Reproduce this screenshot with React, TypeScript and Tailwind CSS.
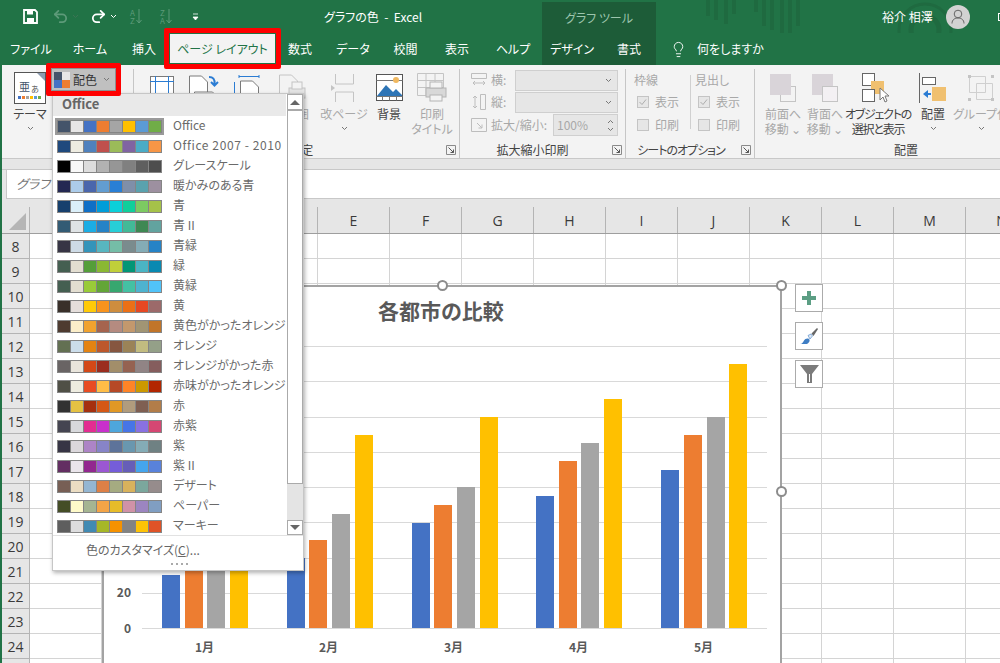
import { Lightbulb, Redo2, Undo2 } from "lucide-react";
import type { ReactNode } from "react";

const SCHEMES: { name: string; colors: string[] }[] = [
  { name: "Office", colors: ["#44546a", "#e7e6e6", "#4472c4", "#ed7d31", "#a5a5a5", "#ffc000", "#5b9bd5", "#70ad47"] },
  { name: "Office 2007 - 2010", colors: ["#1f497d", "#eeece1", "#4f81bd", "#c0504d", "#9bbb59", "#8064a2", "#4bacc6", "#f79646"] },
  { name: "グレースケール", colors: ["#000000", "#f8f8f8", "#dddddd", "#b2b2b2", "#969696", "#808080", "#5f5f5f", "#4d4d4d"] },
  { name: "暖かみのある青", colors: ["#242852", "#acccea", "#4a66ac", "#629dd1", "#297fd5", "#7f8fa9", "#5aa2ae", "#9d90a0"] },
  { name: "青", colors: ["#17406d", "#dbeff9", "#0f6fc6", "#009dd9", "#0bd0d9", "#10cf9b", "#7cca62", "#a5c249"] },
  { name: "青 II", colors: ["#335b74", "#dfe3e5", "#1cade4", "#2683c6", "#27ced7", "#42ba97", "#3e8853", "#62a39f"] },
  { name: "青緑", colors: ["#373545", "#cedbe6", "#3494ba", "#58b6c0", "#75bda7", "#7a8c8e", "#84acb6", "#2683c6"] },
  { name: "緑", colors: ["#455f51", "#e3ded1", "#549e39", "#8ab833", "#c0cf3a", "#029676", "#4ab5c4", "#0989b1"] },
  { name: "黄緑", colors: ["#455f51", "#e3ded1", "#99cb38", "#63a537", "#37a76f", "#44c1a3", "#4eb3cf", "#51c3f9"] },
  { name: "黄", colors: ["#39302a", "#e5dedb", "#ffca08", "#f8931d", "#ce8d3e", "#ec7016", "#e64823", "#9c6a6a"] },
  { name: "黄色がかったオレンジ", colors: ["#4e3b30", "#fbeec9", "#f0a22e", "#a5644e", "#b58b80", "#c3986d", "#a19574", "#c17529"] },
  { name: "オレンジ", colors: ["#637052", "#ccddea", "#e48312", "#bd582c", "#865640", "#9b8357", "#c2bc80", "#94a088"] },
  { name: "オレンジがかった赤", colors: ["#696464", "#e9e5dc", "#d34817", "#9b2d1f", "#a28e6a", "#956251", "#918485", "#855d5d"] },
  { name: "赤味がかったオレンジ", colors: ["#505046", "#eeece0", "#e84c22", "#ffbd47", "#b64926", "#ff8427", "#cc9900", "#b22600"] },
  { name: "赤", colors: ["#323232", "#e5c243", "#a5300f", "#d55816", "#e19825", "#b19c7d", "#7f5f52", "#b27d49"] },
  { name: "赤紫", colors: ["#454551", "#d8d9dc", "#e32d91", "#c830cc", "#4ea6dc", "#4775e7", "#8971e1", "#d54773"] },
  { name: "紫", colors: ["#373545", "#dcd8dc", "#ad84c6", "#8784c7", "#5d739a", "#6997af", "#84acb6", "#6f8183"] },
  { name: "紫 II", colors: ["#632e62", "#eae5eb", "#92278f", "#9b57d3", "#755dd9", "#665eb8", "#45a5ed", "#5982db"] },
  { name: "デザート", colors: ["#775f55", "#ebddc3", "#94b6d2", "#dd8047", "#a5ab81", "#d8b25c", "#7ba79d", "#968c8c"] },
  { name: "ペーパー", colors: ["#444d26", "#fefac9", "#a5b592", "#f3a447", "#e7bc29", "#d092a7", "#9c85c0", "#809ec2"] },
  { name: "マーキー", colors: ["#5e5e5e", "#ddddde", "#418ab3", "#a6b727", "#f69200", "#838383", "#fec306", "#df5327"] },
];

const COLUMNS = ["A", "B", "C", "D", "E", "F", "G", "H", "I", "J", "K", "L", "M", "N"];
const ROWS = [8, 9, 10, 11, 12, 13, 14, 15, 16, 17, 18, 19, 20, 21, 22, 23, 24, 25];

// bar top positions per month: blue, orange, gray, yellow
const BARS = [
  { label: "1月", x: [162, 185, 207, 230], top: [575, 540, 540, 540] },
  { label: "2月", x: [287, 309, 332, 355], top: [558, 540, 514, 435] },
  { label: "3月", x: [412, 434, 457, 480], top: [523, 505, 487, 417] },
  { label: "4月", x: [536, 559, 581, 604], top: [496, 461, 443, 399] },
  { label: "5月", x: [661, 684, 707, 729], top: [470, 435, 417, 364] },
];
const BAR_COLORS = ["#4472c4", "#ed7d31", "#a5a5a5", "#ffc000"];
const GRID_Y = [628, 593, 558, 522, 487, 452, 417, 381, 346];

function Chevron({ className = "" }: { className?: string }) {
  return (
    <svg width="7" height="5" viewBox="0 0 7 5" className={className}>
      <path d="M1 1l2.500 2.500L6 1" fill="none" stroke="#777" strokeWidth="1" />
    </svg>
  );
}

function Launcher() {
  return (
    <svg width="10" height="10" viewBox="0 0 10 10">
      <path d="M.5 9.500v-9h9v9z" fill="none" stroke="#8a8a8a" />
      <path d="M2.500 2.500l5 5M7.500 4.500v3h-3" fill="none" stroke="#555" />
    </svg>
  );
}

function SortIcon({ top, bottom }: { top: string; bottom: string }) {
  return (
    <div className="flex w-[15px] shrink-0 items-center gap-[1px]">
      <span className="flex flex-col text-[8px] leading-[8px] text-[#5d9a79]">
        <span>{top}</span>
        <span>{bottom}</span>
      </span>
      <svg width="6" height="15" viewBox="0 0 6 15">
        <path d="M3 0v14M.5 11L3 14l2.500-3" fill="none" stroke="#5d9a79" />
      </svg>
    </div>
  );
}

function TabLabel({ label, className }: { label: string; className: string }) {
  return <div className={`flex h-full items-center justify-center text-[12px] text-white ${className}`}>{label}</div>;
}

function RibbonBtn({
  width,
  icon,
  lines,
  chevron,
  disabled,
  labelClass = "",
}: {
  width: string;
  icon: ReactNode;
  lines: string[];
  chevron?: boolean;
  disabled?: boolean;
  labelClass?: string;
}) {
  return (
    <div className={`flex shrink-0 flex-col items-center ${width}`}>
      <div className="flex h-[37px] items-center justify-center">{icon}</div>
      <div className={`flex flex-col items-center whitespace-nowrap text-[12px] leading-[15px] ${disabled ? "text-[#a8a8a8]" : "text-[#444]"} ${labelClass}`}>
        {lines.map((l) => (
          <span key={l}>{l}</span>
        ))}
      </div>
      {chevron && <Chevron className="mt-[5px]" />}
    </div>
  );
}

function ThemeIcon() {
  return (
    <svg width="32" height="32" viewBox="0 0 32 32">
      <rect x=".5" y=".5" width="31" height="31" fill="#fff" stroke="#555" />
      <path d="M23 1h8v8z" fill="#8c9bb0" />
      <rect x="4" y="24" width="3" height="3" fill="#4472c4" />
      <rect x="8" y="24" width="3" height="3" fill="#ed7d31" />
      <rect x="12" y="24" width="3" height="3" fill="#a5a5a5" />
      <rect x="16" y="24" width="3" height="3" fill="#ffc000" />
      <rect x="20" y="24" width="3" height="3" fill="#5b9bd5" />
      <rect x="24" y="24" width="3" height="3" fill="#70ad47" />
      <text x="5" y="19" fontSize="11" fill="#44546a">亜</text>
      <text x="17" y="20" fontSize="8" fill="#555">あ</text>
    </svg>
  );
}

function MarginIcon() {
  return (
    <svg width="24" height="24" viewBox="0 0 24 24">
      <rect x=".5" y=".5" width="23" height="23" fill="#fff" stroke="#7a7a7a" />
      <path d="M0 5.500h24M5.500 0v24M18.500 0v24" stroke="#2b7cd3" fill="none" />
    </svg>
  );
}

function OrientIcon() {
  return (
    <svg width="30" height="26" viewBox="0 0 30 26">
      <path d="M.5 25V1h12l6 6v18z" fill="#fff" stroke="#7a7a7a" />
      <path d="M5.500 25v-8h18l6 6v2" fill="#fff" stroke="#7a7a7a" />
      <path d="M20 2c4 0 6 2 5.500 7M22 7l3.500 3.500L29 7" fill="none" stroke="#2b7cd3" strokeWidth="2" />
    </svg>
  );
}

function SizeIcon() {
  return (
    <svg width="26" height="26" viewBox="0 0 26 26">
      <path d="M5 1.500h20M.5 7v19M5 0v3M25 0v3" stroke="#2b7cd3" fill="none" />
      <path d="M6.500 26V6h12l6 6v14" fill="#fff" stroke="#7a7a7a" />
    </svg>
  );
}

function PrintAreaIcon() {
  return (
    <svg width="28" height="28" viewBox="0 0 28 28">
      <path d="M.5 27V1h12l6 6v20z" fill="#f3f3f3" stroke="#c4c4c4" />
      <rect x="10" y="14" width="16" height="10" fill="#e4e4e4" stroke="#c4c4c4" />
      <rect x="13" y="8" width="10" height="7" fill="#f3f3f3" stroke="#c4c4c4" />
    </svg>
  );
}

function BreakIcon() {
  return (
    <svg width="26" height="28" viewBox="0 0 26 28">
      <path d="M4.500 0v10h18V0M4.500 28V18h18v10" fill="none" stroke="#c4c4c4" />
      <path d="M0 11l4 3-4 3z" fill="#c4c4c4" />
    </svg>
  );
}

function BackgroundIcon() {
  return (
    <svg width="27" height="27" viewBox="0 0 27 27">
      <rect x=".5" y=".5" width="26" height="26" fill="#fff" stroke="#555" />
      <path d="M.5 6.500h26M.5 22.500h26M6.500 22.500v4M13.500 22.500v4M20.500 22.500v4" stroke="#777" fill="none" />
      <circle cx="20" cy="6" r="3" fill="#f0b860" />
      <path d="M1 22l9-11 7 7 3-3 6 6v1z" fill="#2e75b6" />
    </svg>
  );
}

function TitlesIcon() {
  return (
    <svg width="30" height="30" viewBox="0 0 30 30">
      <path d="M.5.500h26v22H.5zM.5 7.500h26M.5 14.500h26M9 .5v22M18 .5v22" fill="none" stroke="#c4c4c4" />
      <rect x="9" y="15" width="20" height="9" fill="#d8d8d8" stroke="#b4b4b4" />
      <rect x="13" y="9" width="12" height="6" fill="#f3f3f3" stroke="#b4b4b4" />
      <rect x="13" y="22" width="12" height="6" fill="#f3f3f3" stroke="#b4b4b4" />
    </svg>
  );
}

function FrontIcon({ back }: { back?: boolean }) {
  return back ? (
    <svg width="27" height="28" viewBox="0 0 27 28">
      <rect x="0" y="0" width="21" height="21" fill="#d9d4d9" />
      <rect x="10.500" y="12.500" width="15" height="15" fill="#f3f0f3" stroke="#c4c4c4" />
    </svg>
  ) : (
    <svg width="27" height="28" viewBox="0 0 27 28">
      <rect x="10.500" y="12.500" width="15" height="15" fill="#f3f3f3" stroke="#c4c4c4" />
      <rect x="0" y="0" width="21" height="21" fill="#d9d4d9" />
    </svg>
  );
}

function SelectionIcon() {
  return (
    <svg width="32" height="30" viewBox="0 0 32 30">
      <rect x=".5" y=".5" width="12" height="12" fill="#fff" stroke="#666" />
      <rect x="9" y="8" width="13" height="13" fill="#f0c070" />
      <rect x=".5" y="16.500" width="12" height="12" fill="#fff" stroke="#666" />
      <path d="M18 15v12l3-3 2 5 2-1-2-5h4z" fill="#fff" stroke="#777" />
    </svg>
  );
}

function AlignIcon() {
  return (
    <svg width="28" height="30" viewBox="0 0 28 30">
      <path d="M.5 0v30" stroke="#666" />
      <rect x="3.500" y="4.500" width="13" height="7" fill="#fff" stroke="#666" />
      <rect x="13" y="14" width="14" height="14" fill="#f0c070" />
      <path d="M4 21l5-4v3h3v2H9v3z" fill="#2b7cd3" />
    </svg>
  );
}

function GroupIcon() {
  return (
    <svg width="28" height="28" viewBox="0 0 28 28">
      <path d="M2.500 2.500h16v16h-16zM9.500 9.500h16v16h-16z" fill="none" stroke="#cfcfcf" />
      <path d="M1 1h3v3H1zM24 1h3v3h-3zM1 24h3v3H1zM24 24h3v3h-3z" fill="#c4c4c4" />
    </svg>
  );
}

function ScaleIcon({ kind }: { kind: "w" | "h" | "s" }) {
  return (
    <svg width="16" height="16" viewBox="0 0 16 16">
      {kind === "w" && <path d="M.5 1.500h15v5H.5zM2 11h12M2 11l2-2M2 11l2 2M14 11l-2-2M14 11l-2 2" fill="none" stroke="#bdbdbd" />}
      {kind === "h" && <path d="M9.500.5h5v15h-5zM4 2v12M4 2L2 4M4 2l2 2M4 14l-2-2M4 14l2-2" fill="none" stroke="#bdbdbd" />}
      {kind === "s" && <path d="M.5 1.500h15v13H.5zM6 6l5 5M11 7.500V11H7.500" fill="none" stroke="#bdbdbd" />}
    </svg>
  );
}

function Checkbox({ label }: { label: string }) {
  const checked = label === "表示";
  return (
    <div className="flex h-[23px] items-center gap-[6px] text-[12px] text-[#a8a8a8]">
      <svg width="12" height="12" viewBox="0 0 12 12">
        <rect x=".5" y=".5" width="11" height="11" fill="#e6e6e6" stroke="#c4c4c4" />
        {checked && <path d="M2.500 6l2.500 2.500 4-5" fill="none" stroke="#adadad" />}
      </svg>
      <span>{label}</span>
    </div>
  );
}

function Group({ width, label, children, labelClass = "" }: { width: string; label: string; children: ReactNode; labelClass?: string }) {
  return (
    <div className={`flex h-[89px] shrink-0 flex-col border-r border-[#c6c6c6] ${width}`}>
      <div className="flex h-[72px]">{children}</div>
      <div className={`flex h-[17px] items-center justify-center whitespace-nowrap text-[12px] text-[#444] ${labelClass}`}>{label}</div>
    </div>
  );
}

function TitleBar() {
  return (
    <div className="relative flex h-[33px] items-center">
      <svg width="300" height="33" viewBox="0 0 300 33" className="absolute left-[700px] top-0">
        <path d="M8 0v16M16 0v20M26 0v24M34 0v14M56 0v12M64 0v26M72 0v30M82 0v33M90 0v33M98 0v26" stroke="#1f6a40" strokeWidth="4" />
        <circle cx="225" cy="30" r="14" fill="none" stroke="#1f6a40" strokeWidth="5" />
        <circle cx="225" cy="30" r="26" fill="none" stroke="#1f6a40" strokeWidth="3" />
      </svg>
      {/* quick access */}
      <div className="relative ml-[23px] flex w-[180px] shrink-0 items-center">
        <svg width="15" height="15" viewBox="0 0 15 15">
          <path d="M1 1h11l2 2v11H1z" fill="none" stroke="#fff" strokeWidth="1.800" />
          <path d="M4 1.500h6v4H4zM4 9h7v5H4z" fill="#fff" />
        </svg>
        <Undo2 size={17} strokeWidth={2.500} color="#5d9a79" className="ml-[14px]" />
        <Chevron className="ml-[3px] opacity-30" />
        <Redo2 size={17} strokeWidth={2.500} color="#fff" className="ml-[11px]" />
        <svg width="7" height="5" viewBox="0 0 7 5" className="ml-[3px]">
          <path d="M1 1l2.500 2.500L6 1" fill="none" stroke="#fff" />
        </svg>
        <div className="ml-[13px]">
          <SortIcon top="A" bottom="Z" />
        </div>
        <div className="ml-[15px]">
          <SortIcon top="Z" bottom="A" />
        </div>
        <svg width="7" height="8" viewBox="0 0 7 8" className="ml-[17px]">
          <path d="M1 1h5M1 4h5L3.500 7z" fill="#fff" stroke="#fff" strokeWidth=".8" />
        </svg>
      </div>
      <div className="relative ml-[121px] w-[218px] shrink-0 whitespace-pre text-[12px] text-white">グラフの色  -  Excel</div>
      <div className="relative flex h-[31px] w-[114px] shrink-0 items-center justify-center self-end bg-[#1d5c38] text-[12px] text-[#9cc5ad]">
        グラフ ツール
      </div>
      <div className="relative ml-[226px] w-[64px] shrink-0 whitespace-nowrap text-[12px] text-white">裕介 相澤</div>
      <div className="relative flex h-[24px] w-[24px] shrink-0 items-center justify-center rounded-full bg-[#d2d2d2]">
        <svg width="14" height="15" viewBox="0 0 14 15">
          <circle cx="7" cy="5" r="3.800" fill="none" stroke="#666" />
          <path d="M1 14.500c0-4 3-5.500 6-5.500s6 1.500 6 5.500" fill="none" stroke="#666" />
        </svg>
      </div>
      <div className="relative ml-[28px] h-[8px] w-[8px] shrink-0 border border-white" />
    </div>
  );
}

function Tabs() {
  return (
    <div className="flex h-[32px] items-stretch">
      <TabLabel label="ファイル" className="w-[62px]" />
      <TabLabel label="ホーム" className="w-[56px]" />
      <TabLabel label="挿入" className="w-[52px]" />
      <div className="relative w-[105px]">
        <div className="absolute -bottom-[4px] -left-[6px] -right-[6px] -top-[5px] z-20 rounded-[2px] border-[5px] border-[#f00] bg-[#217346]">
          <div className="mx-[1px] mt-px flex h-[29px] items-center justify-center bg-[#f3f3f3] text-[12px] text-[#217346]">
            ページ レイアウト
          </div>
        </div>
      </div>
      <TabLabel label="数式" className="w-[50px]" />
      <TabLabel label="データ" className="w-[56px]" />
      <TabLabel label="校閲" className="w-[49px]" />
      <TabLabel label="表示" className="w-[54px]" />
      <TabLabel label="ヘルプ" className="w-[58px]" />
      <div className="flex w-[114px] bg-[#1d5c38]">
        <TabLabel label="デザイン" className="w-[60px]" />
        <TabLabel label="書式" className="w-[54px]" />
      </div>
      <div className="ml-[14px] flex items-center gap-[10px] text-[12px] text-white">
        <Lightbulb size={17} strokeWidth={1.300} />
        <span>何をしますか</span>
      </div>
    </div>
  );
}

function Ribbon() {
  return (
    <div className="flex h-[94px] items-start border-b border-[#c8c8c8] bg-[#f3f3f3] pt-[4px]">
      {/* テーマ + 配色 */}
      <div className="flex h-[89px] w-[132px] shrink-0 border-r border-[#c6c6c6]">
        <div className="ml-[7px] w-[42px]">
          <RibbonBtn width="w-[42px]" icon={<ThemeIcon />} lines={["テーマ"]} chevron />
        </div>
        <div className="relative z-20 -ml-[5px] -mt-[6px] h-[33px] w-[75px] rounded-[2px] border-[5px] border-[#f00] bg-[#b4b4b4]">
          <div className="flex h-full items-center border border-[#8f8f8f] bg-[#c0c0c0] pl-[2px]">
            <svg width="16" height="16" viewBox="0 0 16 16">
              <rect x="0" y="0" width="8" height="8" fill="#44546a" />
              <rect x="8" y="0" width="8" height="8" fill="#e7e6e6" />
              <rect x="0" y="8" width="8" height="8" fill="#4472c4" />
              <rect x="8" y="8" width="8" height="8" fill="#ed7d31" />
            </svg>
            <span className="ml-[3px] text-[12px] text-[#333]">配色</span>
            <Chevron className="ml-[6px]" />
          </div>
        </div>
      </div>
      {/* ページ設定 */}
      <Group width="w-[326px] pl-[7px]" label="ページ設定" labelClass="pr-[33px]">
        <RibbonBtn width="w-[42px]" icon={<MarginIcon />} lines={["余白"]} />
        <RibbonBtn width="w-[42px]" icon={<OrientIcon />} lines={["印刷の", "向き"]} />
        <RibbonBtn width="w-[44px]" icon={<SizeIcon />} lines={["サイズ"]} />
        <RibbonBtn
          width="w-[32px]"
          icon={
            <div className="ml-[16px]">
              <PrintAreaIcon />
            </div>
          }
          lines={["印刷範囲"]}
          disabled
        />
        <div className="ml-[16px]">
          <RibbonBtn width="w-[54px]" icon={<BreakIcon />} lines={["改ページ"]} chevron disabled />
        </div>
        <RibbonBtn width="w-[36px]" icon={<BackgroundIcon />} lines={["背景"]} />
        <RibbonBtn width="w-[50px]" icon={<TitlesIcon />} lines={["印刷", "タイトル"]} disabled />
        <div className="absolute left-[446px] top-[145px]">
          <Launcher />
        </div>
      </Group>
      {/* 拡大縮小印刷 */}
      <Group width="w-[166px]" label="拡大縮小印刷" labelClass="pr-[20px]">
        <div className="ml-[11px] flex flex-col text-[12px] text-[#a8a8a8]">
          <div className="flex h-[22px] items-center">
            <ScaleIcon kind="w" />
            <span className="ml-[4px] w-[24px]">横:</span>
            <div className="flex h-[21px] w-[103px] items-center justify-end border border-[#cfcfcf] bg-[#e6e6e6] pr-[5px]">
              <Chevron />
            </div>
          </div>
          <div className="flex h-[22px] items-center">
            <ScaleIcon kind="h" />
            <span className="ml-[4px] w-[24px]">縦:</span>
            <div className="flex h-[21px] w-[103px] items-center justify-end border border-[#cfcfcf] bg-[#e6e6e6] pr-[5px]">
              <Chevron />
            </div>
          </div>
          <div className="mt-px flex h-[22px] items-center">
            <ScaleIcon kind="s" />
            <span className="ml-[4px] w-[62px] whitespace-nowrap">拡大/縮小:</span>
            <div className="flex h-[22px] w-[65px] items-center justify-between border border-[#cfcfcf] bg-[#e6e6e6] px-[3px]">
              <span>100%</span>
              <span className="flex flex-col gap-[3px]">
                <Chevron className="rotate-180" />
                <Chevron />
              </span>
            </div>
          </div>
        </div>
        <div className="absolute left-[612px] top-[145px]">
          <Launcher />
        </div>
      </Group>
      {/* シートのオプション */}
      <Group width="w-[129px]" label="シートのオプション" labelClass="pr-[18px] tracking-[-1px]">
        <div className="ml-[8px] w-[56px] pt-px">
          <div className="text-[12px] leading-[20px] text-[#a8a8a8]">枠線</div>
          <div className="pl-[3px]">
            <Checkbox label="表示" />
            <Checkbox label="印刷" />
          </div>
        </div>
        <div className="mt-[6px] h-[54px] border-r border-[#d0d0d0]" />
        <div className="ml-[4px] w-[56px] pt-px">
          <div className="text-[12px] leading-[20px] text-[#a8a8a8]">見出し</div>
          <div className="pl-[3px]">
            <Checkbox label="表示" />
            <Checkbox label="印刷" />
          </div>
        </div>
        <div className="absolute left-[741px] top-[145px]">
          <Launcher />
        </div>
      </Group>
      {/* 配置 */}
      <div className="flex h-[89px] w-[246px] shrink-0 flex-col">
        <div className="ml-[8px] flex h-[72px]">
          <RibbonBtn width="w-[40px]" icon={<FrontIcon />} lines={["前面へ", "移動 ⌄"]} disabled />
          <RibbonBtn width="w-[44px]" icon={<FrontIcon back />} lines={["背面へ", "移動 ⌄"]} disabled />
          <RibbonBtn width="w-[62px]" icon={<SelectionIcon />} lines={["オブジェクトの", "選択と表示"]} labelClass="tracking-[-1.2px]" />
          <RibbonBtn width="w-[48px]" icon={<AlignIcon />} lines={["配置"]} chevron />
          <RibbonBtn width="w-[48px]" icon={<GroupIcon />} lines={["グループ化"]} chevron disabled />
        </div>
        <div className="flex h-[17px] items-center justify-center pl-[56px] text-[12px] text-[#444]">配置</div>
      </div>
    </div>
  );
}

function Sheet() {
  return (
    <div className="flex flex-col bg-[#e6e6e6]">
      <div className="h-[11px] border-b border-[#c8c8c8]" />
      <div className="ml-[4px] flex h-[29px] items-center border-b border-l border-[#c8c8c8] bg-white pl-[9px] text-[13px] italic text-[#777]">
        グラフ 1
      </div>
      {/* column headers */}
      <div className="flex h-[35px] items-end border-b border-[#9e9e9e]">
        <div className="flex h-[26px] w-[28px] shrink-0 items-end justify-end border-r border-[#b4b4b4] pb-[3px] pr-[3px]">
          <div className="h-0 w-0 border-b-[17px] border-l-[17px] border-b-[#b5b5b5] border-l-transparent" />
        </div>
        {COLUMNS.map((c) => (
          <div
            key={c}
            className="flex h-[26px] w-[72px] shrink-0 items-center justify-center border-r border-[#b4b4b4] [font-family:'Open_Sans',sans-serif] text-[14px] text-[#3a3a3a]"
          >
            {c}
          </div>
        ))}
      </div>
      {ROWS.map((r) => (
        <div key={r} className="flex h-[25px]">
          <div className="flex w-[28px] shrink-0 items-center justify-center border-b border-r border-[#b4b4b4] [font-family:'Open_Sans',sans-serif] text-[14px] text-[#3a3a3a]">
            {r === 25 ? "" : r}
          </div>
          {COLUMNS.map((c) => (
            <div key={c} className="w-[72px] shrink-0 border-b border-r border-[#d4d4d4] bg-white" />
          ))}
        </div>
      ))}
    </div>
  );
}

function Handle({ className }: { className: string }) {
  return <div className={`absolute h-[11px] w-[11px] rounded-full border-2 border-[#8c8c8c] bg-white ${className}`} />;
}

function Chart() {
  return (
    <>
      <div className="absolute left-[102px] top-[285px] h-[390px] w-[680px] border-2 border-[#a3a3a3] bg-white" />
      {/* svg coordinates are page coordinates */}
      <svg width="1000" height="663" viewBox="0 0 1000 663" className="pointer-events-none absolute left-0 top-0">
        {GRID_Y.map((y) => (
          <line key={y} x1="142" x2="767" y1={y + 0.5} y2={y + 0.5} stroke="#d9d9d9" />
        ))}
        {BARS.map((m) =>
          m.x.map((x, i) => <rect key={m.label + i} x={x} y={m.top[i]} width="18" height={628 - m.top[i]} fill={BAR_COLORS[i]} />),
        )}
        <text x="131" y="597" textAnchor="end" fontSize="12" fontWeight="700" fill="#595959">20</text>
        <text x="131" y="633" textAnchor="end" fontSize="12" fontWeight="700" fill="#595959">0</text>
        {BARS.map((m) => (
          <text key={m.label} x={m.x[1] + 19.500} y="652" textAnchor="middle" fontSize="12" fontWeight="700" fill="#595959">
            {m.label}
          </text>
        ))}
      </svg>
      <div className="absolute left-[378px] top-[294px] text-[21px] font-bold leading-[32px] text-[#595959]">各都市の比較</div>
      <Handle className="left-[437px] top-[280px]" />
      <Handle className="left-[776px] top-[280px]" />
      <Handle className="left-[776px] top-[486px]" />
      <div className="absolute left-[795px] top-[284px] flex flex-col gap-[10px]">
        <div className="flex h-[28px] w-[28px] items-center justify-center border border-[#ababab] bg-white">
          <svg width="14" height="14" viewBox="0 0 14 14">
            <path d="M5 0h4v5h5v4H9v5H5V9H0V5h5z" fill="#5c9e84" />
          </svg>
        </div>
        <div className="flex h-[28px] w-[28px] items-center justify-center border border-[#ababab] bg-white">
          <svg width="18" height="18" viewBox="0 0 18 18">
            <path d="M11.500 6.500L17 1l1 1-4.500 7z" fill="#666" />
            <path d="M8 8.500l3-1.500 1.500 2L10 12z" fill="#dfe8f2" stroke="#3f7ec4" strokeWidth=".6" />
            <path d="M0 17c2.500 0 3-2 4-3.500 1-1.500 3-2.500 5-1.500 1.500 1.500 0 4-2 5z" fill="#3f7ec4" />
          </svg>
        </div>
        <div className="flex h-[28px] w-[28px] items-center justify-center border border-[#ababab] bg-white">
          <svg width="19" height="19" viewBox="0 0 19 19">
            <path d="M0 0h19l-7 9v9H7V9z" fill="#7b7b7b" />
            <path d="M9 9h1v8H9z" fill="#fff" />
          </svg>
        </div>
      </div>
    </>
  );
}

function ColorMenu() {
  return (
    <div className="absolute left-[52px] top-[93px] z-10 flex h-[478px] w-[252px] flex-col border border-[#c6c6c6] bg-white shadow-[1px_2px_4px_rgba(0,0,0,0.3)]">
      <div className="flex h-[442px] border-b border-[#e2e2e2]">
        <div className="w-[233px] shrink-0">
          <div className="flex h-[22px] items-center bg-[#e9e9e9] pb-[2px] pl-[9px] text-[13px] font-bold text-[#666]">Office</div>
          {SCHEMES.map((s, i) => (
            <div key={s.name} className="flex h-[20px] items-center pl-[2px]">
              <div className={`flex h-[17px] w-[109px] shrink-0 items-center justify-center ${i === 0 ? "border-2 border-[#9a9a9a]" : ""}`}>
                <div className="flex gap-px bg-[#858585] p-px">
                  {s.colors.map((c, j) => (
                    <div key={j} className="h-[11px] w-[12px]" style={{ backgroundColor: c }} />
                  ))}
                </div>
              </div>
              <span className={`ml-[9px] whitespace-nowrap pb-[2px] text-[12px] text-[#6a6a6a] ${i === 1 ? "tracking-[0.6px]" : ""}`}>{s.name}</span>
            </div>
          ))}
        </div>
        {/* scrollbar */}
        <div className="ml-px flex w-[16px] flex-col bg-[#e4e4e4]">
          <div className="flex h-[16px] items-center justify-center border border-[#aaa] bg-white">
            <div className="h-0 w-0 border-x-[5px] border-b-[5px] border-x-transparent border-b-[#666]" />
          </div>
          <div className="h-[374px] border border-[#aaa] bg-white" />
          <div className="flex-1" />
          <div className="flex h-[15px] items-center justify-center border border-[#aaa] bg-white">
            <div className="h-0 w-0 border-x-[5px] border-t-[5px] border-x-transparent border-t-[#666]" />
          </div>
        </div>
      </div>
      <div className="flex h-[27px] items-center pl-[33px] pt-[1px] text-[12px] text-[#666]">
        <span>
          色のカスタマイズ(<span className="underline">C</span>)...
        </span>
      </div>
      <div className="flex justify-center gap-[3px] pl-[2px]">
        {[0, 1, 2, 3].map((d) => (
          <div key={d} className="h-[2px] w-[2px] bg-[#aaa]" />
        ))}
      </div>
    </div>
  );
}

export default function App() {
  return (
    <div className="relative h-[663px] w-[1000px] overflow-hidden bg-[#217346] [font-family:'Noto_Sans_CJK_JP',sans-serif] [font-feature-settings:'palt']">
      <TitleBar />
      <Tabs />
      <div className="ml-[2px]">
        <Ribbon />
        <Sheet />
      </div>
      <Chart />
      <ColorMenu />
    </div>
  );
}
